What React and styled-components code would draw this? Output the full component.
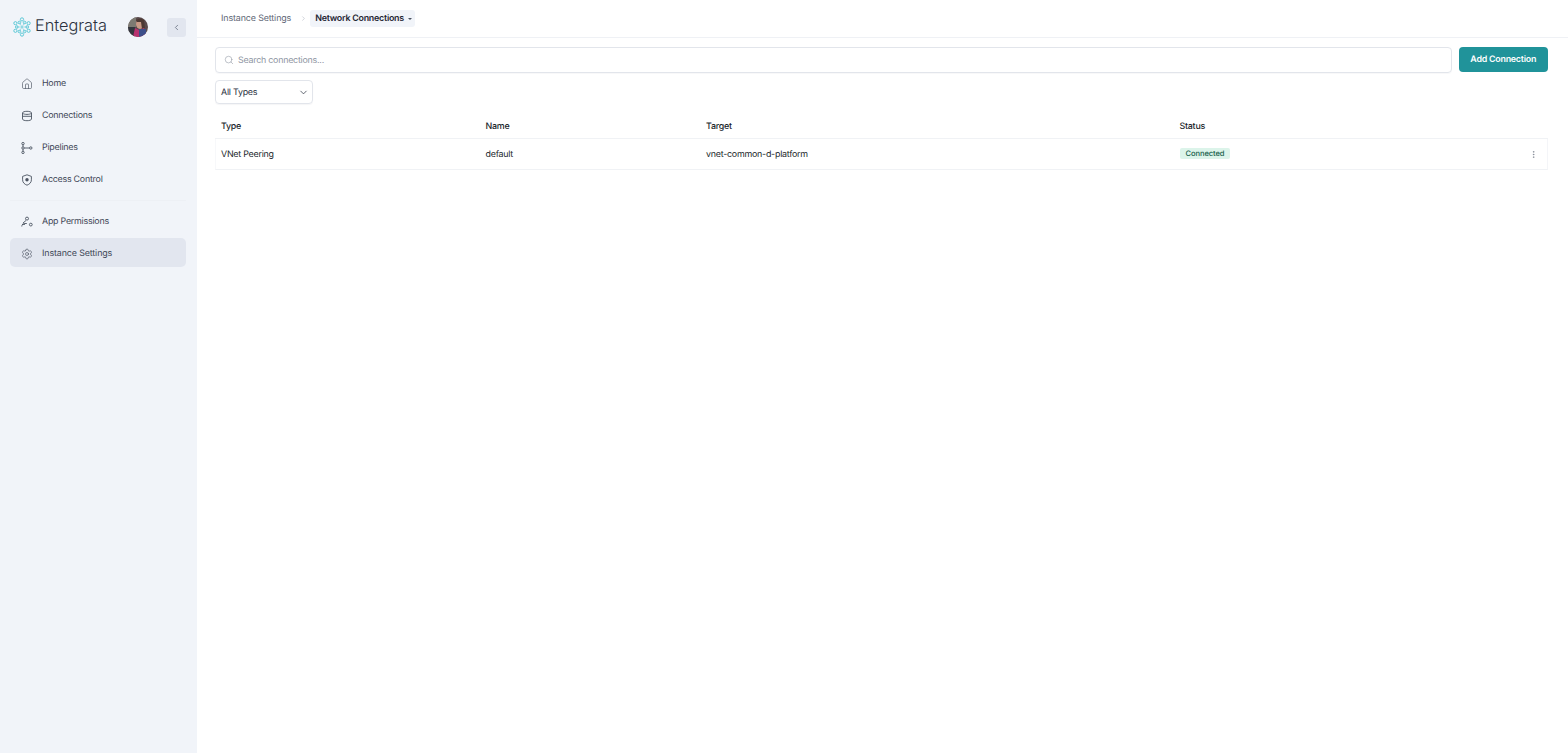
import React from 'react';
import styled, { createGlobalStyle } from 'styled-components';
import { House, Search, ChevronDown, ChevronRight, ChevronLeft, EllipsisVertical, Settings } from 'lucide-react';

const Global = createGlobalStyle`
  html, body { margin: 0; height: 100%; background: #fff; }
  #root { height: 100%; }
  * { box-sizing: border-box; }
  body { font-family: Inter, "Liberation Sans", sans-serif; color: #1a1f2b; text-rendering: geometricPrecision; }
  input, button { text-rendering: geometricPrecision; }
`;
const textStyle = `font-size: 8.9px; letter-spacing: -0.24px;`;
const Page = styled.div`display: flex; height: 753px; overflow: hidden;`;
const Sidebar = styled.aside`width: 197px; flex: none; background: #f1f4f9; padding: 14px 11px 0 10px; display: flex; flex-direction: column;`;
const Brand = styled.div`display: flex; align-items: center; height: 26px; margin-bottom: 28px; padding-left: 1.5px;`;
const BrandName = styled.span`font-size: 16.3px; font-weight: 300; color: #2b3240; margin-left: 3.5px; line-height: 24px; padding-bottom: 5px;`;
const AvatarWrap = styled.span`margin-left: 21px; width: 20px; height: 20px; display: block;`;
const Collapse = styled.button`margin-left: auto; width: 19px; height: 19px; border: 0; padding: 0; border-radius: 3px; background: #e2e6ef; color: #5f6878; display: flex; align-items: center; justify-content: center;`;
const Nav = styled.nav`display: flex; flex-direction: column; gap: 3px;`;
const Item = styled.a`height: 29px; border-radius: 5px; display: flex; align-items: center; gap: 9px; padding: 2px 0 0 11px; ${textStyle} font-weight: 400; color: #3e4656; background: ${p => p.$active ? '#e2e6ef' : 'transparent'}; ${p => p.$active && 'letter-spacing: -0.12px;'}`;
const Divider = styled.div`height: 1px; background: #edf0f5; margin: 3.5px 0 2.5px;`;
const Main = styled.main`flex: 1; min-width: 0; display: flex; flex-direction: column;`;
const Header = styled.header`height: 38px; border-bottom: 1px solid #eff1f5; display: flex; align-items: center; padding: 0 0 1px 24px; ${textStyle}`;
const Crumb = styled.span`color: #5e6675; padding-top: 1px; letter-spacing: -0.12px;`;
const Sep = styled.span`margin: 0 3.5px 0 8.5px; color: #9aa1ae; display: flex;`;
const Current = styled.span`display: flex; align-items: center; gap: 4px; height: 17px; padding: 1px 3.5px 0 5px; border-radius: 3px; background: #f1f4f9; font-weight: 600; color: #1f2633;`;
const Caret = styled.span`width: 0; height: 0; border-left: 2px solid transparent; border-right: 2px solid transparent; border-top: 2px solid #4b5361;`;
const Content = styled.div`padding: 9px 20px 0 18px;`;
const SearchRow = styled.div`display: flex; gap: 7px; align-items: flex-start;`;
const SearchBox = styled.label`flex: 1; height: 26px; border: 1px solid #e2e5eb; border-radius: 4px; display: flex; align-items: center; gap: 4px; padding-left: 8px; color: #9299a6; box-shadow: 0 1px 1px rgba(20,30,50,.03);`;
const SearchInput = styled.input`flex: 1; border: 0; outline: 0; padding: 1px 0 0; font-family: Inter, sans-serif; font-weight: 400; ${textStyle} background: transparent; &::placeholder { color: #8f96a3; opacity: 1; }`;
const AddButton = styled.button`width: 89.5px; height: 24.5px; border: 0; border-radius: 4px; background: #20939a; color: #fff; font-family: Inter, sans-serif; font-weight: 600; ${textStyle} padding: 1px 0 0;`;
const Select = styled.div`margin-top: 7px; width: 98px; height: 24px; border: 1px solid #e2e5eb; border-radius: 4px; display: flex; align-items: center; justify-content: space-between; padding: 1px 3.5px 0 5px; ${textStyle} color: #2b3240; box-shadow: 0 1px 1px rgba(20,30,50,.04);`;
const Table = styled.div`margin-top: 11px;`;
const Row = styled.div`display: grid; grid-template-columns: 264.5px 220.5px 473.5px 1fr 32px; align-items: center; height: ${p => p.$head ? '24px' : '31px'}; border-bottom: 1px solid #f0f2f5; padding: ${p => p.$head ? '0 0 1px 6px' : '1px 0 0 5px'}; ${textStyle} font-weight: ${p => p.$head ? 500 : 400}; color: #1a1f2b; ${p => !p.$head && 'border-right: 1px solid #f4f5f8; border-left: 1px solid #f7f8fa;'}`;
const Badge = styled.span`display: flex; align-items: center; justify-self: start; height: 11.5px; margin-bottom: 2px; padding: 0 6px; border-radius: 2px; background: #dcf4ea; color: #17604a; font-size: 7.6px; letter-spacing: -0.1px; font-weight: 500;`;
const Kebab = styled.span`display: flex; justify-content: center; color: #6b7280; padding-left: 4px;`;

const Logo = () => {
  const pts = [0, 60, 120, 180, 240, 300];
  return (
    <svg width="20" height="20" viewBox="0 0 20 20" fill="none" stroke="#4fc4d3" strokeWidth="0.9" style={{ flex: 'none' }}>
      {pts.map(a => {
        const r = a * Math.PI / 180;
        const x = 10 + 7.6 * Math.sin(r), y = 10 - 7.6 * Math.cos(r);
        const r2 = (a + 30) * Math.PI / 180;
        const x2 = 10 + 5.2 * Math.sin(r2), y2 = 10 - 5.2 * Math.cos(r2);
        return <g key={a}>
          <circle cx={x} cy={y} r="1.6" />
          <circle cx={x2} cy={y2} r="1.3" />
          <path d={`M${x2} ${y2}L10 10`} strokeWidth="0.5" />
        </g>;
      })}
    </svg>
  );
};
const Avatar = () => (
  <svg width="20" height="20" viewBox="0 0 20 20">
    <defs><clipPath id="av"><circle cx="10" cy="10" r="10" /></clipPath></defs>
    <g clipPath="url(#av)">
      <rect width="20" height="20" fill="#5a4a4c" />
      <rect x="0" y="0" width="8" height="10" fill="#7d7a72" />
      <rect x="0" y="10" width="7" height="10" fill="#33363e" />
      <ellipse cx="12" cy="7" rx="4" ry="5" fill="#c99a86" />
      <path d="M8 3q4-3 8 0l1 8-3 1-1-7-4 0z" fill="#4d3934" />
      <path d="M5 20l2-9 4 2 5-2 3 9z" fill="#b8326f" />
      <rect x="11" y="12" width="7" height="8" fill="#3d4f8a" />
    </g>
  </svg>
);
const Ic = { width: 12, height: 12, strokeWidth: 1.3, color: '#4b5361' };
const NavIcon = styled.span`width: 12px; height: 12px; display: flex; align-items: center; justify-content: center; flex: none;`;
const StackIcon = () => (
  <svg width="12" height="12" viewBox="0 0 12 12" fill="none" stroke="#4b5361" strokeWidth="0.9">
    <path d="M1.500 3c0-1 2-1.700 4.500-1.700s4.500.7 4.500 1.700v6c0 1-2 1.700-4.500 1.700S1.500 10 1.500 9z" />
    <path d="M1.500 3.200c1 .9 2.800 1.200 4.500 1.200s3.500-.3 4.500-1.200M1.500 6.300h9" />
  </svg>
);
const PipelinesIcon = () => (
  <svg width="12" height="12" viewBox="0 0 12 12" fill="none" stroke="#4b5361" strokeWidth="0.9">
    <circle cx="2" cy="1.600" r="1.200" /><circle cx="2" cy="6" r="1.200" /><circle cx="2" cy="10.400" r="1.200" /><circle cx="9.800" cy="6" r="1.200" />
    <path d="M2 2.800v2M2 7.200v2M3.200 6h5.400" />
  </svg>
);
const PermIcon = () => (
  <svg width="12" height="12" viewBox="0 0 12 12" fill="none" stroke="#4b5361" strokeWidth="0.9">
    <circle cx="6" cy="2.600" r="1.500" /><circle cx="9.800" cy="8.600" r="1.400" />
    <path d="M0.800 10.500c0-2 1.500-3 3-3h2M1 8.400h3M5 4.500L2 7" />
  </svg>
);
const ShieldIcon = () => (
  <svg width="12" height="12" viewBox="0 0 12 12" fill="none" stroke="#4b5361" strokeWidth="0.9">
    <path d="M6 .8l4.400 1.600v3.400c0 2.800-2 4.500-4.400 5.400C3.600 10.300 1.600 8.600 1.600 5.800V2.400z" />
    <circle cx="6" cy="5.800" r="1.700" fill="#4b5361" stroke="none" />
  </svg>
);

const items = [
  ['Home', <House {...Ic} />],
  ['Connections', <StackIcon />],
  ['Pipelines', <PipelinesIcon />],
  ['Access Control', <ShieldIcon />],
];

export default function App() {
  return (
    <Page>
      <Global />
      <Sidebar>
        <Brand>
          <Logo />
          <BrandName>Entegrata</BrandName>
          <AvatarWrap><Avatar /></AvatarWrap>
          <Collapse><ChevronLeft width={9} height={9} strokeWidth={2} /></Collapse>
        </Brand>
        <Nav>
          {items.map(([t, i]) => <Item key={t}><NavIcon>{i}</NavIcon>{t}</Item>)}
          <Divider />
          <Item><NavIcon><PermIcon /></NavIcon>App Permissions</Item>
          <Item $active><NavIcon><Settings {...Ic} /></NavIcon>Instance Settings</Item>
        </Nav>
      </Sidebar>
      <Main>
        <Header>
          <Crumb>Instance Settings</Crumb>
          <Sep><ChevronRight width={7} height={7} strokeWidth={1.5} /></Sep>
          <Current>Network Connections<Caret /></Current>
        </Header>
        <Content>
          <SearchRow>
            <SearchBox><Search width={10} height={10} strokeWidth={1.4} /><SearchInput placeholder="Search connections..." /></SearchBox>
            <AddButton>Add Connection</AddButton>
          </SearchRow>
          <Select>All Types<ChevronDown width={11} height={11} strokeWidth={1.6} /></Select>
          <Table>
            <Row $head><span>Type</span><span>Name</span><span>Target</span><span>Status</span><span /></Row>
            <Row><span>VNet Peering</span><span>default</span><span>vnet-common-d-platform</span><Badge>Connected</Badge><Kebab><EllipsisVertical width={9} height={9} strokeWidth={1.5} /></Kebab></Row>
          </Table>
        </Content>
      </Main>
    </Page>
  );
}
